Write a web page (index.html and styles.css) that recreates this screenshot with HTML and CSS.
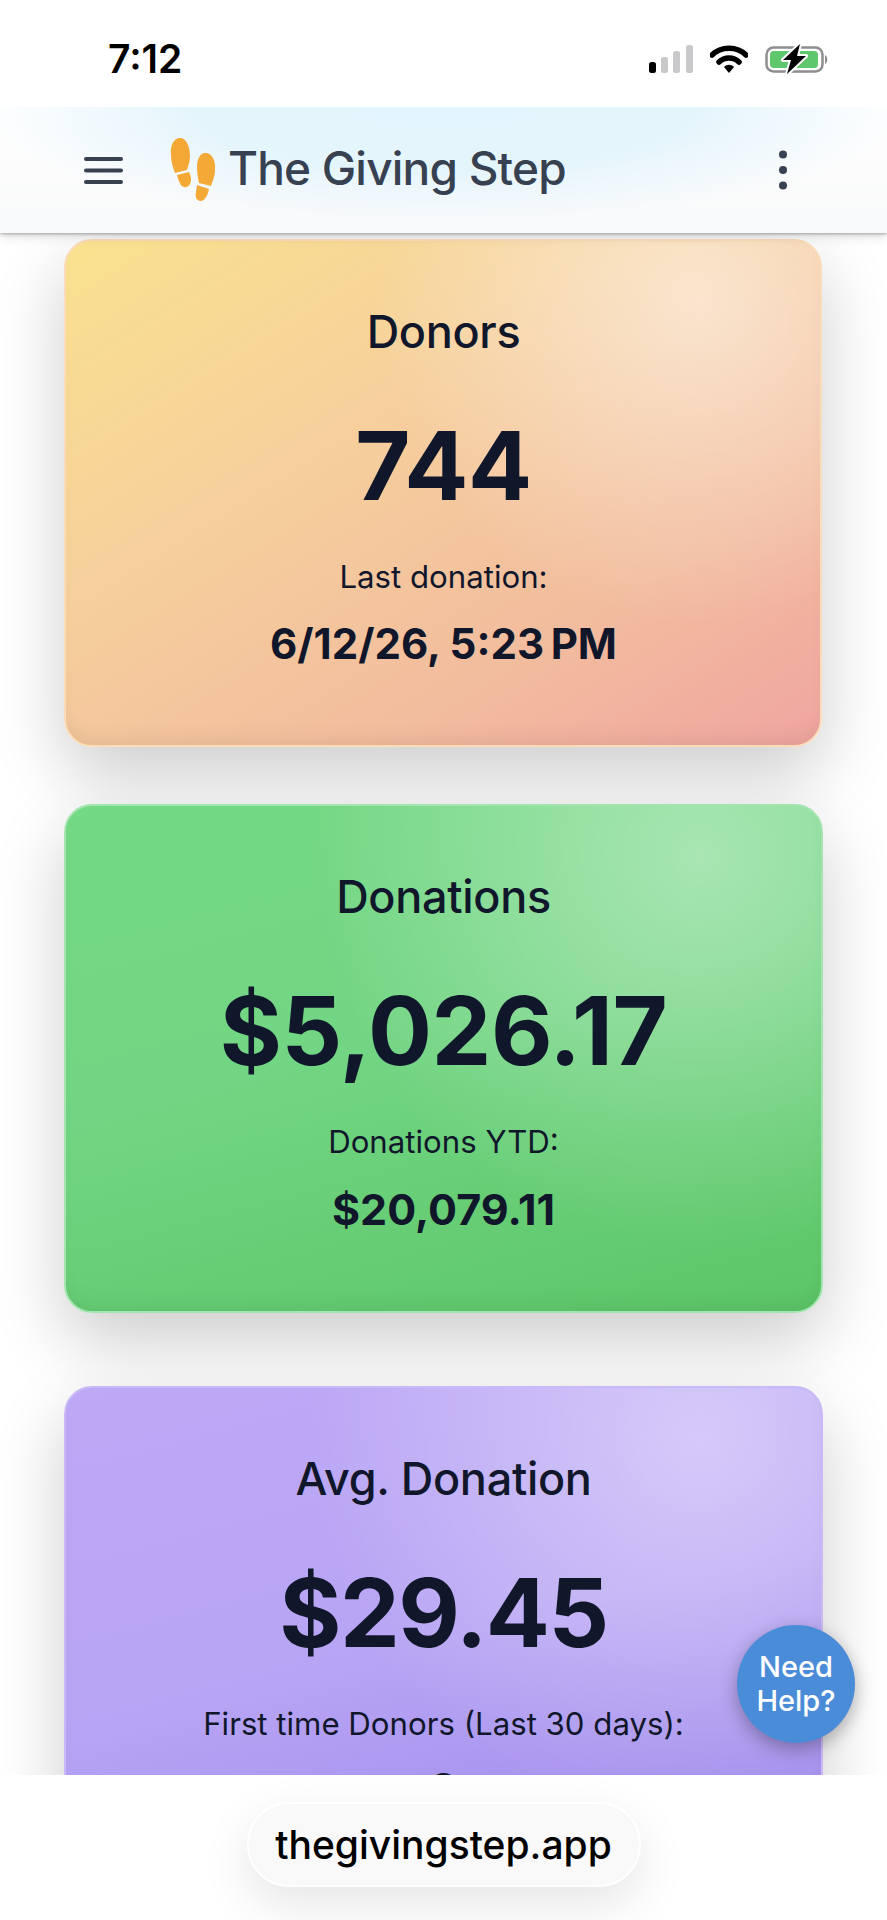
FILE: index.html
```html
<!DOCTYPE html>
<html lang="en">
<head>
<meta charset="utf-8">
<title>The Giving Step</title>
<link rel="stylesheet" href="styles.css">
</head>
<body>
<div class="screen">
  <div class="status">
    <span class="time">7:12</span>
    <div class="status-icons">
      <svg class="signal" width="44" height="28" viewBox="0 0 44 28"><rect x="0" y="17" width="7" height="11" rx="2.5" fill="#000"/><rect x="12" y="12" width="7" height="16" rx="2.5" fill="#c9c9cb"/><rect x="24" y="6" width="7" height="22" rx="2.5" fill="#c9c9cb"/><rect x="37" y="0" width="7" height="28" rx="2.5" fill="#c9c9cb"/></svg>
      <svg class="wifi" width="38" height="29" viewBox="0 0 38 29"><path d="M2 11 C11 2 27 2 36 11" fill="none" stroke="#000" stroke-width="5.5" stroke-linecap="round"/><path d="M9 18 C14.5 12.5 23.5 12.5 29 18" fill="none" stroke="#000" stroke-width="5.5" stroke-linecap="round"/><path d="M14 23 C17 20 21 20 24 23 L19 29 Z" fill="#000"/></svg>
      <svg class="battery" width="64" height="30" viewBox="0 0 64 30"><rect x="1.500" y="3.500" width="56" height="24" rx="7" fill="#fff" stroke="#8e8e90" stroke-width="2.500"/><rect x="5" y="7" width="48" height="17" rx="4" fill="#5fc86c"/><path d="M60 11 C63 12 63 19 60 20 Z" fill="#8e8e90"/><path d="M35 0 L18 16 H26 L22 30 L41 12 H32 Z" fill="#000" stroke="#fff" stroke-width="4" stroke-linejoin="round" paint-order="stroke"/></svg>
    </div>
  </div>
  <header class="topbar">
    <svg class="menu" width="39" height="27" viewBox="0 0 39 27"><path d="M2 2 H37 M2 13.500 H37 M2 25 H37" stroke="#374151" stroke-width="4" stroke-linecap="round"/></svg>
    <svg class="logo" width="46" height="64" viewBox="0 0 46 64" fill="#f4a836"><path d="M1 17 C0 7 4 0 10 0 C16 0 20 8 20 18 C20 24 18 28 17 32 L5 35 C3 29 1 24 1 17 Z"/><path d="M7 37 L19 34 C21 38 22 42 20 46 C18 50 13 50 11 47 C9 44 8 41 7 37 Z"/><path d="M27 29 C27 20 31 14 36 15 C42 15 46 23 45 32 C45 39 42 44 41 48 L29 45 C28 40 27 35 27 29 Z"/><path d="M27 47 L39 51 C38 56 36 62 31 63 C26 63 25 58 26 54 Z"/></svg>
    <span class="brand">The Giving Step</span>
    <svg class="more" width="10" height="40" viewBox="0 0 10 40" fill="#374151"><circle cx="5" cy="4.500" r="4"/><circle cx="5" cy="20" r="4"/><circle cx="5" cy="35.500" r="4"/></svg>
  </header>
  <main class="content">
    <section class="card card-amber">
      <h2 class="card-title">Donors</h2>
      <p class="card-value">744</p>
      <p class="card-label">Last donation:</p>
      <p class="card-sub">6/12/26, 5:23&#8239;PM</p>
    </section>
    <section class="card card-green">
      <h2 class="card-title">Donations</h2>
      <p class="card-value">$5,026.17</p>
      <p class="card-label">Donations YTD:</p>
      <p class="card-sub">$20,079.11</p>
    </section>
    <section class="card card-purple">
      <h2 class="card-title">Avg. Donation</h2>
      <p class="card-value">$29.45</p>
      <p class="card-label">First time Donors (Last 30 days):</p>
      <p class="card-sub">8</p>
    </section>
  </main>
  <button class="help">Need Help?</button>
  <footer class="addressbar">
    <div class="url">thegivingstep.app</div>
  </footer>
</div>
</body>
</html>
```
FILE: styles.css
```css
* { box-sizing: border-box; }
html, body { margin: 0; padding: 0; background: #fff; }
body { font-family: Inter, "Liberation Sans", sans-serif; color: #11172b; }
.screen { position: relative; width: 887px; height: 1920px; overflow: hidden; display: flex; flex-direction: column; background: #fff; }

.status { height: 107px; flex: none; display: flex; justify-content: space-between; align-items: flex-start; padding: 44px 58px 0 108px; background: #fff; position: relative; z-index: 3; }
.time { font-size: 39px; line-height: 30px; font-weight: 600; color: #000; }
.status-icons { display: flex; align-items: flex-start; gap: 17px; }
.signal { display: block; margin-top: 1px; }
.wifi { display: block; }
.battery { display: block; }

.topbar { height: 126px; flex: none; display: flex; align-items: center; padding: 0 99px 0 84px; position: relative; z-index: 2;
  background: radial-gradient(ellipse 52% 92% at 50% 0%, #e3f5fd 0%, #e5f5fc 55%, rgba(229,245,252,0) 100%), linear-gradient(#fff, #f8f9fa);
  box-shadow: 0 1px 3px rgba(0,0,0,.3), 0 4px 10px rgba(0,0,0,.12); }
.menu { display: block; flex: none; margin-top: 1px; }
.logo { display: block; flex: none; margin-left: 47px; margin-top: -1px; }
.brand { margin-left: 12px; margin-top: -4px; font-size: 46px; font-weight: 500; color: #374151; letter-spacing: -0.8px; white-space: nowrap; flex: 1; }
.more { display: block; flex: none; }

.content { flex: 1; min-height: 0; overflow: hidden; padding: 6px 64px 0 64px; display: flex; flex-direction: column; }
.card { flex: none; height: 508px; border-radius: 28px; padding: 64px 24px 0; text-align: center; border: 2px solid; box-shadow: 0 28px 70px rgba(0,0,0,.2), inset 0 -14px 24px -14px rgba(0,0,0,.1); }
.card + .card { margin-top: 57px; }
.card-purple.card { margin-top: 73px; }
.card-amber { margin-right: 1px; padding-right: 23px; border-color: #fbdcb8; background: radial-gradient(circle at 84% 12%, rgba(255,255,255,.5) 0, rgba(255,255,255,0) 42%), linear-gradient(148deg, #fae28f 0%, #f6cf9c 38%, #f2bc9e 72%, #f0a5a0 100%); }
.card-green { height: 509px; border-color: #a3e5b0; background: radial-gradient(circle at 84% 10%, rgba(255,255,255,.38) 0, rgba(255,255,255,0) 50%), linear-gradient(165deg, #74d985 0%, #72d583 45%, #5cc667 100%); }
.card-purple { border-color: #c9baf7; background: radial-gradient(circle at 84% 10%, rgba(255,255,255,.4) 0, rgba(255,255,255,0) 50%), linear-gradient(165deg, #bda9f6 0%, #b7a4f4 50%, #a48fec 82%); }
.card-title { margin: 0; font-size: 45px; line-height: 54px; font-weight: 500; color: #11172b; letter-spacing: -0.3px; }
.card-value { margin: 49px 0 0; font-size: 95px; line-height: 116px; font-weight: 700; color: #11172b; letter-spacing: -0.5px; }
.card-purple .card-value { letter-spacing: -1.500px; }
.card-label { margin: 32px 0 0; font-size: 31.2px; line-height: 42px; font-weight: 400; color: #11172b; }
.card-sub { margin: 21px 0 0; font-size: 43px; line-height: 50px; font-weight: 700; color: #11172b; }
.card-amber .card-sub { font-size: 42px; }
.card-purple .card-sub { margin-top: 18px; }

.help { position: absolute; left: 737px; top: 1625px; width: 118px; height: 118px; border-radius: 50%; border: 0; padding: 0 10px; background: #4a8cd8; color: #fff; font: 500 29px/34px Inter, "Liberation Sans", sans-serif; box-shadow: 0 6px 18px rgba(0,0,0,.3); z-index: 4; }

.addressbar { height: 145px; flex: none; display: flex; justify-content: center; align-items: flex-start; padding-top: 27px; background: #fff; position: relative; z-index: 3; }
.url { width: 394px; height: 85px; border-radius: 42px; border: 2px solid #fff; background: #f9f9f9; display: flex; align-items: center; justify-content: center; font-size: 39px; font-weight: 500; color: #000; box-shadow: 0 18px 50px rgba(0,0,0,.1); }
```
